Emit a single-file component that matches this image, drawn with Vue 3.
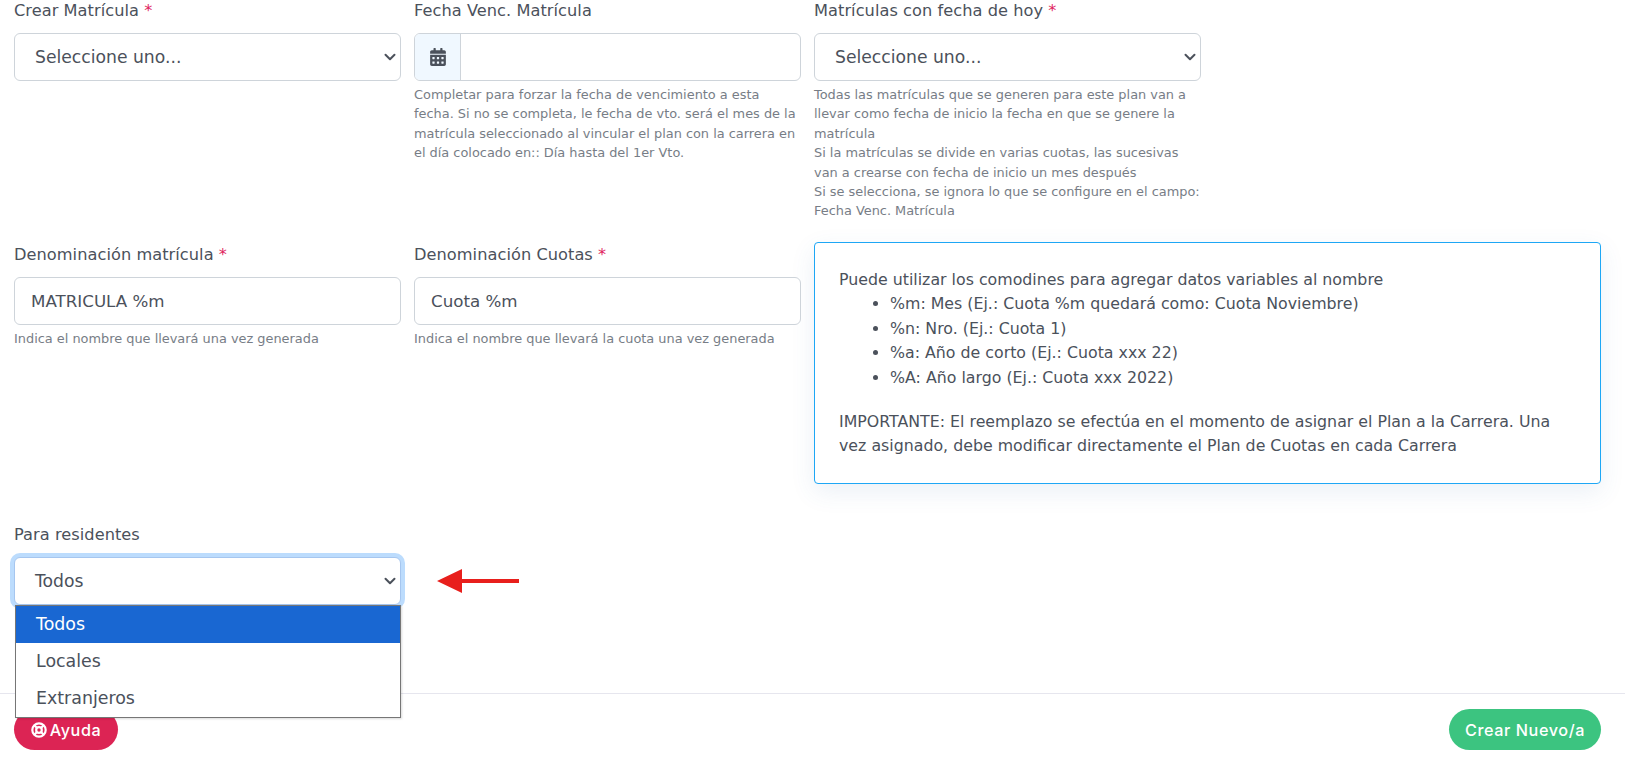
<script setup>
const help1 = 'Completar para forzar la fecha de vencimiento a esta fecha. Si no se completa, le fecha de vto. será el mes de la matrícula seleccionado al vincular el plan con la carrera en el día colocado en:: Día hasta del 1er Vto.'
const wildcards = [
  '%m: Mes (Ej.: Cuota %m quedará como: Cuota Noviembre)',
  '%n: Nro. (Ej.: Cuota 1)',
  '%a: Año de corto (Ej.: Cuota xxx 22)',
  '%A: Año largo (Ej.: Cuota xxx 2022)'
]
const options = ['Todos', 'Locales', 'Extranjeros']
</script>

<template>
  <div class="page">
    <main class="form">
      <div class="field r1">
        <label>Crear Matrícula <span class="req">*</span></label>
        <div class="select"><span>Seleccione uno...</span>
          <svg class="chev" viewBox="0 0 16 16"><path d="M2 5l6 6 6-6" /></svg>
        </div>
      </div>
      <div class="field r1">
        <label>Fecha Venc. Matrícula</label>
        <div class="group">
          <span class="addon">
            <svg viewBox="0 0 448 512"><path d="M0 464c0 26.5 21.5 48 48 48h352c26.5 0 48-21.5 48-48V192H0v272zm320-196c0-6.6 5.4-12 12-12h40c6.6 0 12 5.4 12 12v40c0 6.6-5.4 12-12 12h-40c-6.6 0-12-5.4-12-12v-40zm0 128c0-6.6 5.4-12 12-12h40c6.6 0 12 5.4 12 12v40c0 6.6-5.4 12-12 12h-40c-6.6 0-12-5.4-12-12v-40zM192 268c0-6.6 5.4-12 12-12h40c6.6 0 12 5.4 12 12v40c0 6.6-5.4 12-12 12h-40c-6.6 0-12-5.4-12-12v-40zm0 128c0-6.6 5.4-12 12-12h40c6.6 0 12 5.4 12 12v40c0 6.6-5.4 12-12 12h-40c-6.6 0-12-5.4-12-12v-40zM64 268c0-6.6 5.4-12 12-12h40c6.6 0 12 5.4 12 12v40c0 6.6-5.4 12-12 12H76c-6.6 0-12-5.4-12-12v-40zm0 128c0-6.6 5.4-12 12-12h40c6.6 0 12 5.4 12 12v40c0 6.6-5.4 12-12 12H76c-6.6 0-12-5.4-12-12v-40zM400 64h-48V16c0-8.8-7.2-16-16-16h-32c-8.8 0-16 7.2-16 16v48H160V16c0-8.8-7.2-16-16-16h-32c-8.8 0-16 7.2-16 16v48H48C21.5 64 0 85.5 0 112v48h448v-48c0-26.5-21.5-48-48-48z" /></svg>
          </span>
        </div>
        <p class="help">{{ help1 }}</p>
      </div>
      <div class="field r1 narrow">
        <label>Matrículas con fecha de hoy <span class="req">*</span></label>
        <div class="select"><span>Seleccione uno...</span>
          <svg class="chev" viewBox="0 0 16 16"><path d="M2 5l6 6 6-6" /></svg>
        </div>
        <p class="help">Todas las matrículas que se generen para este plan van a llevar como fecha de inicio la fecha en que se genere la matrícula<br />Si la matrículas se divide en varias cuotas, las sucesivas van a crearse con fecha de inicio un mes después<br />Si se selecciona, se ignora lo que se configure en el campo: Fecha Venc. Matrícula</p>
      </div>

      <div class="field">
        <label>Denominación matrícula <span class="req">*</span></label>
        <div class="input">MATRICULA %m</div>
        <p class="help">Indica el nombre que llevará una vez generada</p>
      </div>
      <div class="field">
        <label>Denominación Cuotas <span class="req">*</span></label>
        <div class="input">Cuota %m</div>
        <p class="help">Indica el nombre que llevará la cuota una vez generada</p>
      </div>
      <aside class="info">
        <div>Puede utilizar los comodines para agregar datos variables al nombre</div>
        <ul>
          <li v-for="w in wildcards" :key="w">{{ w }}</li>
        </ul>
        <div>IMPORTANTE: El reemplazo se efectúa en el momento de asignar el Plan a la Carrera. Una vez asignado, debe modificar directamente el Plan de Cuotas en cada Carrera</div>
      </aside>

      <div class="field residents">
        <label>Para residentes</label>
        <div class="dropdown-wrap">
          <div class="select focused"><span>Todos</span>
            <svg class="chev" viewBox="0 0 16 16"><path d="M2 5l6 6 6-6" /></svg>
          </div>
          <ul class="menu">
            <li v-for="(o, i) in options" :key="o" :class="{ active: i === 0 }">{{ o }}</li>
          </ul>
        </div>
      </div>
      <div class="arrow-cell">
        <svg class="arrow" viewBox="0 0 82 24"><path d="M0 12 25 0v10h57v4H25v10z" /></svg>
      </div>
    </main>
    <footer class="footer">
      <button class="btn danger">
        <svg viewBox="0 0 16 16" class="ring">
          <circle cx="8" cy="8" r="6.7" />
          <circle cx="8" cy="8" r="2.8" />
          <path d="M3.3 3.3 6 6M12.7 3.3 10 6M3.3 12.7 6 10M12.7 12.7 10 10" />
        </svg>
        Ayuda
      </button>
      <button class="btn success">Crear Nuevo/a</button>
    </footer>
  </div>
</template>

<style scoped>
.page {
  width: 1625px;
  height: 760px;
  overflow: hidden;
  background: #fff;
  font-family: "DejaVu Sans", Inter, sans-serif;
  color: #4b515b;
  position: relative;
}
.form {
  display: grid;
  grid-template-columns: 387px 387px 787px;
  column-gap: 13px;
  padding: 0 14px;
  height: 693px;
  box-sizing: border-box;
  align-content: start;
}
.field { min-width: 0; }
.r1 { min-height: 244px; }
.narrow { width: 387px; }
label {
  display: block;
  height: 20px;
  line-height: 22px;
  margin-bottom: 13px;
  font-size: 16.2px;
  letter-spacing: 0.05px;
  color: #4b515b;
}
.req { color: #e0245e; }
.select, .input, .group {
  box-sizing: border-box;
  height: 48px;
  border: 1px solid #ced4da;
  border-radius: 6px;
  background: #fff;
  display: flex;
  align-items: center;
  color: #4b515b;
  position: relative;
}
.select { padding-left: 20px; font-size: 17.2px; }
.input { padding-left: 16px; font-size: 16.7px; }
.group { overflow: hidden; }
.addon {
  width: 45px;
  height: 100%;
  background: #f0f8ff;
  border-right: 1px solid #ced4da;
  display: flex;
  align-items: center;
  justify-content: center;
}
.addon svg { width: 16px; height: 18px; fill: #4b515b; }
.chev {
  position: absolute;
  right: 4px;
  top: 17px;
  width: 12px;
  height: 12px;
  fill: none;
  stroke: #4b515b;
  stroke-width: 2.67;
  stroke-linecap: round;
  stroke-linejoin: round;
}
.help {
  margin: 4px 0 0;
  font-size: 12.9px;
  line-height: 19.4px;
  color: #777d86;
}
.info {
  box-sizing: border-box;
  height: 242px;
  margin-top: -2px;
  margin-bottom: 40px;
  padding: 25px 24px 24px;
  border: 1px solid #1ea7f5;
  border-radius: 4px;
  background: #fff;
  box-shadow: 0 8px 24px rgba(60, 110, 170, 0.1);
  font-size: 15.8px;
  line-height: 24.4px;
  color: #4b515b;
}
.info ul {
  margin: 0 0 20px;
  padding-left: 51px;
}
.dropdown-wrap { position: relative; }
.focused {
  border-color: #a6c6ef;
  box-shadow: 0 0 0 4px #bcdcfd;
}
.menu {
  position: absolute;
  left: 1px;
  right: 0;
  top: 48px;
  margin: 0;
  padding: 0;
  list-style: none;
  border: 1px solid #767676;
  background: #fff;
  font-size: 17.4px;
  z-index: 3;
  box-shadow: 1px 1px 2px rgba(0, 0, 0, 0.15);
}
.menu li {
  height: 37px;
  line-height: 37px;
  padding-left: 20px;
  color: #4b515b;
}
.menu li.active { background: #1967d2; color: #fff; }
.arrow-cell { position: relative; }
.arrow {
  position: absolute;
  left: 23px;
  top: 45px;
  width: 82px;
  height: 24px;
  fill: #e81f1c;
}
.footer {
  box-sizing: border-box;
  height: 67px;
  border-top: 1px solid #e6e6ee;
  padding: 15px 24px 0 14px;
  display: flex;
  justify-content: space-between;
  align-items: flex-start;
}
.btn {
  height: 41px;
  border: 0;
  border-radius: 21px;
  color: #fff;
  font-family: Inter, sans-serif;
  font-size: 16.2px;
  font-weight: 500;
  letter-spacing: 0.6px;
  display: inline-flex;
  align-items: center;
  padding: 0;
}
.danger {
  width: 104px;
  background: #dc2454;
  justify-content: center;
  gap: 3px;
}
.success {
  width: 152px;
  background: #3cc480;
  justify-content: center;
}
.ring {
  width: 16px;
  height: 16px;
  fill: none;
  stroke: #fff;
  stroke-width: 2.2;
}
</style>
